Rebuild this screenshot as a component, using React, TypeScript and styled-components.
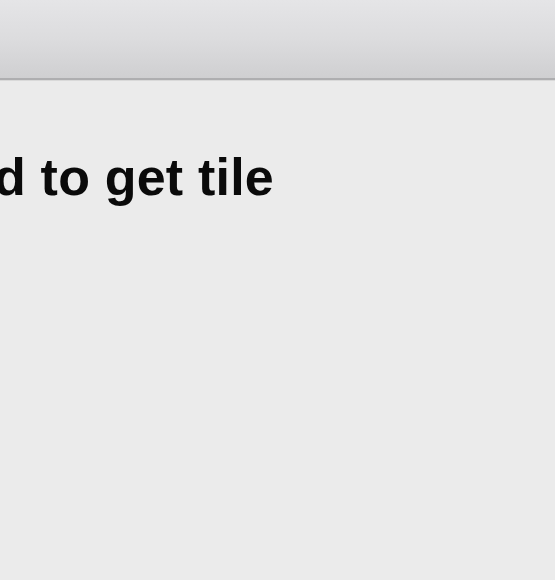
import React from "react";
import styled, { createGlobalStyle } from "styled-components";

const Global = createGlobalStyle`
  html, body {
    margin: 0;
    padding: 0;
    width: 555px;
    height: 580px;
    overflow: hidden;
    background: #ebebeb;
  }
  #root { height: 580px; }
`;

const Window = styled.div`
  display: flex;
  flex-direction: column;
  width: 555px;
  height: 580px;
  background: #ebebeb;
  overflow: hidden;
`;

const TitleBar = styled.div`
  flex: 0 0 78px;
  background: linear-gradient(to bottom, #e5e5e7 0%, #dcdcde 50%, #cfcfd1 100%);
  border-bottom: 2px solid #aeaeb0;
  box-shadow: 0 1px 0 #d9d9d9;
`;

const Content = styled.div`
  flex: 1;
  padding-top: 67px;
`;

const Message = styled.h1`
  margin: 0 0 0 -6px;
  font-family: "Liberation Sans", Arial, sans-serif;
  font-weight: 700;
  font-size: 52px;
  line-height: 60px;
  color: #0a0a0a;
  white-space: nowrap;
  letter-spacing: 0.2px;
`;

export default function App() {
  return (
    <>
      <Global />
      <Window>
        <TitleBar />
        <Content>
          <Message>d to get tile</Message>
        </Content>
      </Window>
    </>
  );
}
